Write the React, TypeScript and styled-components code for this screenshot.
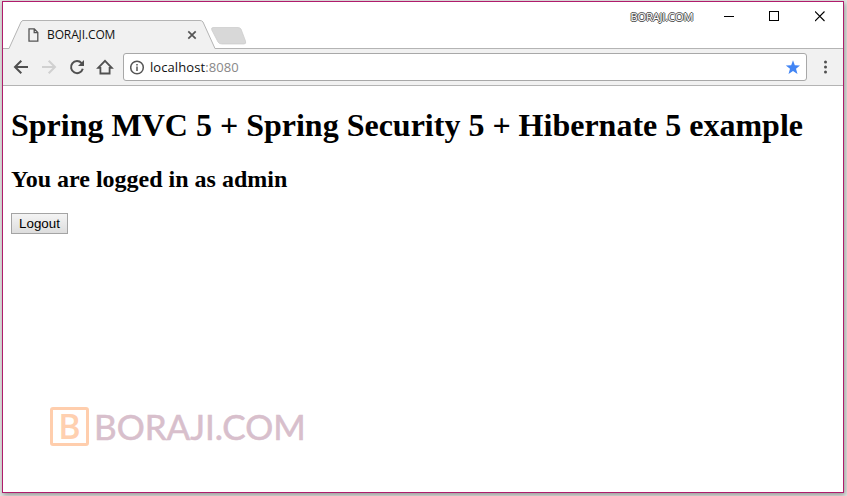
import React from "react";
import styled, { createGlobalStyle } from "styled-components";

const GlobalStyle = createGlobalStyle`
  * { box-sizing: border-box; }
  body { margin: 0; background: #dcdcdc; overflow: hidden; }
  svg { display: block; flex: none; }
`;

const Desktop = styled.div`
  width: 847px;
  height: 496px;
  padding: 1px 3px 3px 2px;
  background: #e4e4e2;
  overflow: hidden;
`;

const BrowserWindow = styled.div`
  width: 842px;
  height: 492px;
  border: 1px solid #b01c6c;
  background: #fff;
  box-shadow: 1px 2px 5px rgba(0, 0, 0, 0.35);
  display: flex;
  flex-direction: column;
`;

const TitleBar = styled.header`
  height: 47px;
  flex: none;
  display: flex;
  justify-content: space-between;
  box-shadow: inset 0 -1px #b4b4b4;
`;

const TabStrip = styled.div`
  display: flex;
  align-items: flex-end;
`;

const Tab = styled.div`
  position: relative;
  width: 208px;
  height: 29px;
  margin-left: 5px;
  padding: 0 19px 0 20px;
  display: flex;
  align-items: center;
`;

const TabShape = styled.svg`
  position: absolute;
  inset: 0;
`;

const TabTitle = styled.span`
  position: relative;
  flex: 1;
  margin-left: 8px;
  font: 12px/16px "Open Sans", sans-serif;
  letter-spacing: -0.12px;
  color: #111;
  white-space: nowrap;
`;

const TabGlyph = styled.svg`
  position: relative;
`;

const NewTab = styled.svg`
  margin: 0 0 4px -5px;
`;

const Controls = styled.div`
  display: flex;
  height: 29px;
  align-items: center;
`;

const Profile = styled.span`
  width: 63px;
  margin-right: 13px;
  font: 11px/14px "Open Sans", sans-serif;
  letter-spacing: -0.1px;
  color: #fff;
  white-space: nowrap;
  text-shadow: -1px 0 #555, 1px 0 #555, 0 -1px #555, 0 1px #555;
`;

const ControlButton = styled.div`
  width: 45.5px;
  height: 29px;
  display: flex;
  align-items: center;
  justify-content: center;
`;

const Toolbar = styled.nav`
  height: 37px;
  flex: none;
  display: flex;
  align-items: center;
  padding: 0 10px 0 8px;
  background: #f1f1f1;
  border-bottom: 1px solid #b4b4b4;
`;

const NavIcon = styled.svg`
  width: 20px;
  height: 20px;
  margin-right: 8px;
`;

const AddressBar = styled.div`
  width: 684px;
  height: 28px;
  display: flex;
  align-items: center;
  padding: 0 6px;
  background: #fff;
  border: 1px solid #a8a8a8;
  border-radius: 3px;
`;

const Address = styled.span`
  flex: 1;
  margin-left: 5px;
  font: 13px/18px "Open Sans", sans-serif;
  letter-spacing: 0.08px;
  color: #111;
`;

const Port = styled.span`
  color: #888;
`;

const MenuIcon = styled.svg`
  margin-left: 16px;
`;

const Page = styled.main`
  flex: 1;
  padding: 21px 8px 0;
  font-family: "Liberation Serif", serif;
  color: #000;
`;

const Heading = styled.h1`
  margin: 0;
  font-size: 32px;
  line-height: 37px;
  white-space: nowrap;
`;

const Status = styled.h2`
  margin: 22px 0 0;
  font-size: 24px;
  line-height: 27px;
`;

const LogoutButton = styled.button`
  display: block;
  margin: 20px 0 0;
  width: 57px;
  height: 21px;
  padding: 0;
  border: 1px solid #a4a4a4;
  border-radius: 0;
  background: linear-gradient(#f4f4f4, #dddddd);
  font: 13.33px/17px "Liberation Sans", sans-serif;
  color: #000;
`;

const Brand = styled.div`
  display: flex;
  align-items: center;
  margin: 173px 0 0 39px;
`;

const BrandMark = styled.div`
  width: 39px;
  height: 39px;
  border: 3px solid #ffcead;
  border-radius: 3px;
  display: flex;
  align-items: center;
  justify-content: center;
  font: 600 34px/33px "Open Sans", sans-serif;
  color: #ffd0b0;
`;

const BrandName = styled.span`
  margin-left: 5px;
  font: 35px/39px Lato, sans-serif;
  color: #d8bfcc;
  -webkit-text-stroke: 0.6px #d8bfcc;
`;

export default function App() {
  return (
    <Desktop>
      <GlobalStyle />
      <BrowserWindow>
        <TitleBar>
          <TabStrip>
            <Tab>
              <TabShape width="208" height="29">
                <path d="M0 28.5H1L13 2Q14 .5 15 .5H192Q194 .5 195 2L207 28.5H208V29H0Z" fill="#f1f1f1" />
                <path d="M0 28.5H1L13 2Q14 .5 15 .5H192Q194 .5 195 2L207 28.5H208" fill="none" stroke="#b4b4b4" />
              </TabShape>
              <TabGlyph width="11" height="14" viewBox="0 0 11 14" fill="none" stroke="#555" strokeWidth="1.3">
                <path d="M1 .8H6.3L9.8 4.5V13.2H1ZM6.2 .8V4.7H9.8" />
              </TabGlyph>
              <TabTitle>BORAJI.COM</TabTitle>
              <TabGlyph width="10" height="10" viewBox="0 0 10 10" stroke="#555" strokeWidth="1.7">
                <path d="M1.3 1.3L8.7 8.7M8.7 1.3L1.3 8.7" />
              </TabGlyph>
            </Tab>
            <NewTab width="36" height="18">
              <path d="M2 .5H27Q29 .5 30 2L34.500 14Q35.500 17 33 17H11Q8 17 7 15L.8 3Q0 .5 2 .5Z" fill="#d8d8d8" stroke="#cacaca" strokeWidth=".7" />
            </NewTab>
          </TabStrip>
          <Controls>
            <Profile>BORAJI.COM</Profile>
            <ControlButton>
              <svg width="11" height="11"><path d="M0 5.500H10" stroke="#000" /></svg>
            </ControlButton>
            <ControlButton>
              <svg width="11" height="11"><rect x=".5" y=".5" width="9" height="9" fill="none" stroke="#000" /></svg>
            </ControlButton>
            <ControlButton>
              <svg width="11" height="11"><path d="M0 .5L9.500 10M9.500 .5L0 10" stroke="#000" strokeWidth="1.1" /></svg>
            </ControlButton>
          </Controls>
        </TitleBar>
        <Toolbar>
          <NavIcon fill="none" stroke="#505050" strokeWidth="2">
            <path d="M17 10H4.500M10.300 3.700L4 10L10.300 16.300" />
          </NavIcon>
          <NavIcon fill="none" stroke="#d0d0d0" strokeWidth="2">
            <path d="M3 10H15.500M9.700 3.700L16 10L9.700 16.300" />
          </NavIcon>
          <NavIcon fill="none" stroke="#505050" strokeWidth="2">
            <path d="M14.600 6.200A6 6 0 1 0 15.800 11.800" />
            <path d="M17 3V9H11Z" fill="#505050" stroke="none" />
          </NavIcon>
          <NavIcon fill="none" stroke="#505050" strokeWidth="1.8">
            <path d="M3.200 10.900H5.400V16.500H14.600V10.900H16.800L10 3.800Z" />
          </NavIcon>
          <AddressBar>
            <svg width="15" height="15" fill="none" stroke="#555" strokeWidth="1.5">
              <circle cx="7" cy="7.5" r="6.3" />
              <path d="M7 6.500V11M7 3.900V5.400" />
            </svg>
            <Address>
              localhost<Port>:8080</Port>
            </Address>
            <svg width="15" height="15" viewBox="0 0 15 15" fill="#4285f4">
              <path d="M8 .3L9.800 5.300L15 5.500L11 8.800L12.500 14L8 11L3.500 14L5 8.800L.8 5.500L6.200 5.300Z" />
            </svg>
          </AddressBar>
          <MenuIcon width="5" height="14" fill="#505050">
            <circle cx="2.500" cy="2" r="1.5" />
            <circle cx="2.500" cy="7" r="1.5" />
            <circle cx="2.500" cy="12" r="1.5" />
          </MenuIcon>
        </Toolbar>
        <Page>
          <Heading>Spring MVC 5 + Spring Security 5 + Hibernate 5 example</Heading>
          <Status>You are logged in as admin</Status>
          <LogoutButton>Logout</LogoutButton>
          <Brand>
            <BrandMark>B</BrandMark>
            <BrandName>BORAJI.COM</BrandName>
          </Brand>
        </Page>
      </BrowserWindow>
    </Desktop>
  );
}
